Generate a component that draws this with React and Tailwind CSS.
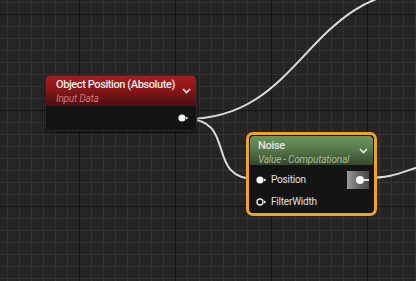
import React from "react";

function Grid() {
  const v = [];
  for (let x = 7; x < 416; x += 12) {
    const major = (x - 79) % 96 === 0;
    v.push(
      <line key={"v" + x} x1={x + 0.5} y1={0} x2={x + 0.5} y2={281} stroke={major ? "#151515" : "#343434"} strokeWidth={1} />
    );
  }
  const h = [];
  for (let y = 2; y < 281; y += 12) {
    const major = (y - 14) % 96 === 0;
    h.push(
      <line key={"h" + y} x1={0} y1={y + 0.5} x2={416} y2={y + 0.5} stroke={major ? "#151515" : "#343434"} strokeWidth={1} />
    );
  }
  const minorV = v.filter((l) => l.props.stroke !== "#151515");
  const majorV = v.filter((l) => l.props.stroke === "#151515");
  const minorH = h.filter((l) => l.props.stroke !== "#151515");
  const majorH = h.filter((l) => l.props.stroke === "#151515");
  return (
    <svg className="absolute inset-0" width="416" height="281" shapeRendering="crispEdges">
      {minorV}
      {minorH}
      {majorV}
      {majorH}
    </svg>
  );
}

function Wires() {
  return (
    <svg className="absolute inset-0" width="416" height="281">
      <g fill="none" stroke="#dcdcdc" strokeWidth="2" strokeLinecap="round">
        <path d="M186 119 C304 119 306 -10 426 -10" />
        <path d="M186 119 C238 119 204 179 256 179" />
        <path d="M366 178 C402 178 404 168 440 162" />
      </g>
    </svg>
  );
}

function Chevron() {
  return (
    <svg width="9" height="6" viewBox="0 0 9 6">
      <path d="M1 1 L4.5 4.5 L8 1" fill="none" stroke="#e8e8e8" strokeWidth="1.6" />
    </svg>
  );
}

function Pin({ hollow }) {
  return (
    <svg width="11" height="8" viewBox="0 0 11 8">
      {hollow ? (
        <circle cx="4" cy="4" r="3" fill="none" stroke="#e6e6e6" strokeWidth="1.4" />
      ) : (
        <circle cx="4" cy="4" r="3.6" fill="#f2f2f2" />
      )}
      <path d="M8 2.6 L10.4 4 L8 5.4 Z" fill="#e6e6e6" />
    </svg>
  );
}

const font = { fontFamily: "Roboto, 'Noto Sans', sans-serif" };

export default function App() {
  return (
    <div className="relative w-[416px] h-[281px] overflow-hidden bg-[#252525]" style={font}>
      <Grid />
      <Wires />

      {/* Object Position node */}
      <div className="absolute left-[45px] top-[75px] w-[152px] h-[56px] rounded-[5px] overflow-hidden bg-[#131313] border border-[#2a2a2a] shadow-[0_2px_4px_rgba(0,0,0,0.6)] flex flex-col">
        <div className="h-[30px] flex items-start justify-between pl-[10px] pr-[5px] bg-[linear-gradient(180deg,#a41d20_0%,#8e1719_40%,#4a0f10_100%)]">
          <div className="flex flex-col pt-[2px]">
            <span className="text-[11px] leading-[13px] font-medium text-[#ececec] tracking-[-0.4px]">Object Position (Absolute)</span>
            <span className="text-[10px] leading-[12px] italic text-[#d07878] tracking-[-0.2px] mt-[2px]">Input Data</span>
          </div>
          <div className="pt-[12px]">
            <Chevron />
          </div>
        </div>
        <div className="flex-1 flex items-center justify-end pr-[7px]">
          <Pin />
        </div>
      </div>

      {/* Noise node (selected) */}
      <div className="absolute left-[246px] top-[132px] w-[131px] h-[84px] rounded-[7px] border-[3px] border-[#f2a41f] p-px bg-[#101010]">
        <div className="w-full h-full rounded-[4px] overflow-hidden bg-[#141414] flex flex-col">
          <div className="h-[29px] flex items-start justify-between pl-[8px] pr-[5px] bg-[linear-gradient(180deg,#6c9660_0%,#577a4b_45%,#34472d_100%)]">
            <div className="flex flex-col pt-[3px]">
              <span className="text-[11px] leading-[13px] font-medium text-[#e4e4e4] tracking-[-0.3px]">Noise</span>
              <span className="text-[10px] leading-[12px] italic text-[#a7b89b] tracking-[-0.2px] mt-[2px]">Value - Computational</span>
            </div>
            <div className="pt-[12px]">
              <Chevron />
            </div>
          </div>
          <div className="flex-1 flex flex-col pt-[5px]">
            <div className="h-[19px] flex items-center justify-between">
              <div className="flex items-center gap-[4px] pl-[6px]">
                <Pin />
                <span className="text-[10px] text-[#e0e0e0] tracking-[-0.2px]">Position</span>
              </div>
              <div className="w-[22px] h-[18px] mr-[4px] flex items-center justify-start pl-[9px] bg-[linear-gradient(90deg,#9a9a9a_0%,#6a6a6a_50%,#4a4a4a_100%)]">
                <div className="relative flex items-center">
                  <div className="w-[8px] h-[8px] rounded-full bg-[#f5f5f5]" />
                  <div className="w-[5px] h-[2px] bg-[#dcdcdc]" />
                </div>
              </div>
            </div>
            <div className="h-[3px]" />
            <div className="h-[19px] flex items-center gap-[4px] pl-[6px]">
              <Pin hollow />
              <span className="text-[10px] text-[#e0e0e0] tracking-[-0.2px]">FilterWidth</span>
            </div>
          </div>
        </div>
      </div>
    </div>
  );
}
